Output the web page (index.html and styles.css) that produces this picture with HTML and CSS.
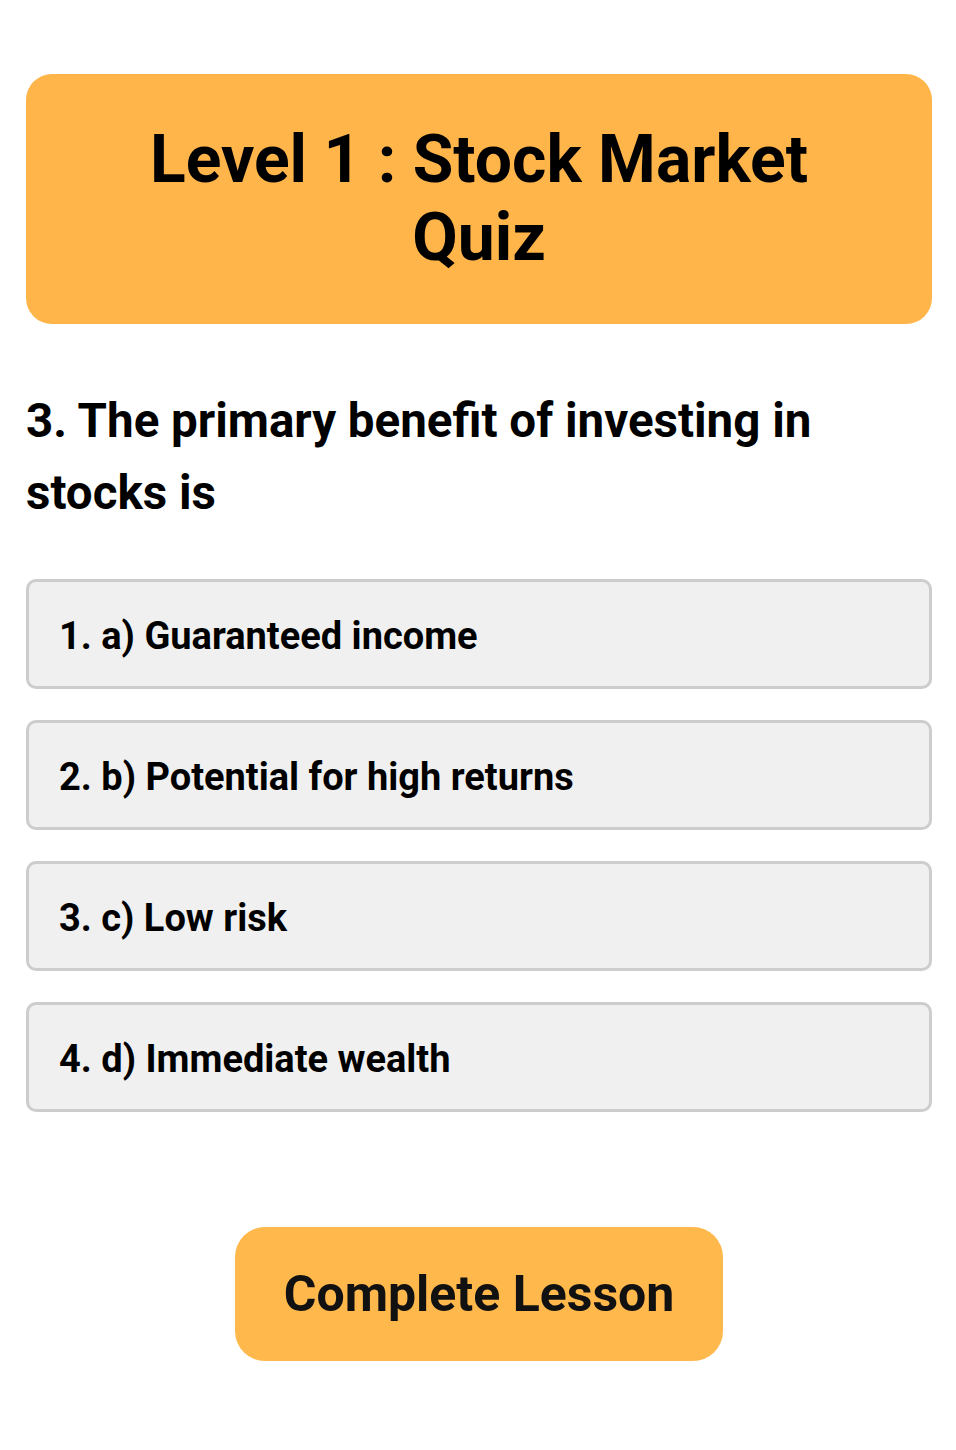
FILE: index.html
```html
<!DOCTYPE html>
<html lang="en">
<head>
    <meta charset="UTF-8">
    <title>Level 1 : Stock Market Quiz</title>
    <link rel="stylesheet" href="styles.css">
</head>
<body>
    <div class="quiz">
        <div class="quiz-header">
            <h1 class="quiz-title">Level 1 : Stock Market Quiz</h1>
        </div>
        <div class="question">3. The primary benefit of investing in stocks is</div>
        <div class="options">
            <div class="option">1. a) Guaranteed income</div>
            <div class="option">2. b) Potential for high returns</div>
            <div class="option">3. c) Low risk</div>
            <div class="option">4. d) Immediate wealth</div>
        </div>
        <div class="actions">
            <button class="complete-btn">Complete Lesson</button>
        </div>
    </div>
</body>
</html>
```

FILE: styles.css
```css
body {
    margin: 0;
    background: #fff;
    color: #000;
    font-family: Roboto, "Noto Sans", sans-serif;
}
.quiz {
    padding: 74px 24px 40px 26px;
}
.quiz-header {
    background: #ffb54a;
    border-radius: 26px;
    padding: 47px 110px;
    text-align: center;
}
.quiz-title {
    margin: 0;
    font-size: 66px;
    line-height: 78px;
    font-weight: 700;
}
.question {
    margin-top: 61px;
    font-size: 47.5px;
    line-height: 72px;
    font-weight: 700;
}
.options {
    margin-top: 50px;
    display: flex;
    flex-direction: column;
    gap: 31px;
}
.option {
    background: #f0f0f0;
    border: 3px solid #cdcdcd;
    border-radius: 10px;
    padding: 30px 30px 26px;
    font-size: 38px;
    line-height: 48px;
    font-weight: 700;
}
.actions {
    margin-top: 115px;
    display: flex;
    justify-content: center;
}
.complete-btn {
    background: #ffb84c;
    color: #111;
    border: none;
    border-radius: 30px;
    padding: 37px 30px;
    font-family: inherit;
    font-size: 50px;
    line-height: 60px;
    font-weight: 700;
    width: 488px;
}
```
